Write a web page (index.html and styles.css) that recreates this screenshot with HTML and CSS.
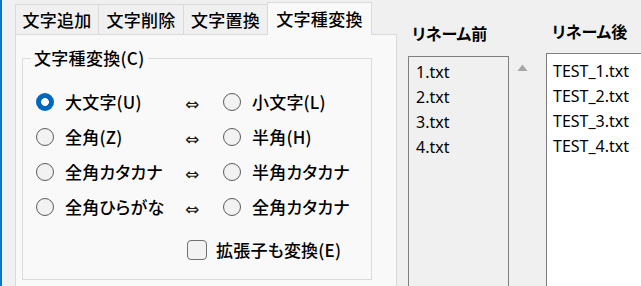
FILE: index.html
```html
<!DOCTYPE html>
<html lang="ja">
<head>
<meta charset="utf-8">
<title>文字種変換</title>
<link rel="stylesheet" href="styles.css">
</head>
<body>
<div class="window">
  <div class="accent"></div>
  <div class="left">
    <div class="tabs">
      <div class="tab t1">文字追加</div>
      <div class="tab t2">文字削除</div>
      <div class="tab t3">文字置換</div>
      <div class="tab t4 active">文字種変換</div>
    </div>
    <div class="panel">
      <fieldset class="group">
        <legend>文字種変換(C)</legend>
        <div class="rows">
          <div class="row">
            <div class="opt opt-left"><span class="radio checked"></span><span class="lbl">大文字(U)</span></div>
            <span class="arrow">⇔</span>
            <div class="opt"><span class="radio"></span><span class="lbl">小文字(L)</span></div>
          </div>
          <div class="row">
            <div class="opt opt-left"><span class="radio"></span><span class="lbl">全角(Z)</span></div>
            <span class="arrow">⇔</span>
            <div class="opt"><span class="radio"></span><span class="lbl">半角(H)</span></div>
          </div>
          <div class="row">
            <div class="opt opt-left"><span class="radio"></span><span class="lbl">全角カタカナ</span></div>
            <span class="arrow">⇔</span>
            <div class="opt"><span class="radio"></span><span class="lbl">半角カタカナ</span></div>
          </div>
          <div class="row">
            <div class="opt opt-left"><span class="radio"></span><span class="lbl">全角ひらがな</span></div>
            <span class="arrow">⇔</span>
            <div class="opt"><span class="radio"></span><span class="lbl">全角カタカナ</span></div>
          </div>
          <div class="check-row">
            <span class="checkbox"></span><span class="lbl">拡張子も変換(E)</span>
          </div>
        </div>
      </fieldset>
    </div>
  </div>
  <div class="right">
    <div class="col col-before">
      <div class="heading">リネーム前</div>
      <div class="list list-before">
        <div class="item">1.txt</div>
        <div class="item">2.txt</div>
        <div class="item">3.txt</div>
        <div class="item">4.txt</div>
      </div>
    </div>
    <div class="scroll">
      <svg width="11" height="7" viewBox="0 0 11 7"><polygon points="0.5,7 5.5,0.5 10.5,7" fill="#a6a6a6"/></svg>
    </div>
    <div class="col col-after">
      <div class="heading">リネーム後</div>
      <div class="list list-after">
        <div class="item">TEST_1.txt</div>
        <div class="item">TEST_2.txt</div>
        <div class="item">TEST_3.txt</div>
        <div class="item">TEST_4.txt</div>
      </div>
    </div>
  </div>
</div>
</body>
</html>
```

FILE: styles.css
```css
html, body {
  margin: 0;
  padding: 0;
  overflow: hidden;
  background: #f0f0f0;
}

body {
  font-family: "Noto Sans CJK JP", "Noto Sans", sans-serif;
  color: #000;
  font-feature-settings: "palt";
}

.window {
  display: flex;
  width: 641px;
  height: 286px;
  background: #f0f0f0;
}

.accent {
  width: 2px;
  flex-shrink: 0;
  background: #0078d7;
}

.left {
  margin-left: 13px;
  width: 382px;
  flex-shrink: 0;
  display: flex;
  flex-direction: column;
}

.tabs {
  display: flex;
  align-items: flex-end;
  height: 34px;
  position: relative;
  z-index: 1;
}

.tab {
  box-sizing: border-box;
  height: 30px;
  border: 1px solid #dadada;
  border-bottom: none;
  background: #f0f0f0;
  font-size: 17px;
  font-weight: 500;
  line-height: 26px;
  padding-top: 2px;
  text-align: center;
  letter-spacing: 0.3px;
}

.t1 { width: 84px; }
.t2 { width: 86px; margin-left: -1px; }
.t3 { width: 85px; margin-left: -1px; }
.t4 { width: 105px; margin-left: -1px; }

.tab.active {
  height: 33px;
  margin-bottom: -1px;
  background: #f9f9f9;
  padding-top: 0;
  line-height: 32px;
}

.panel {
  flex: 1;
  border: 1px solid #dadada;
  border-bottom: none;
  background: #f9f9f9;
  padding: 12px 25px 0 6px;
}

.group {
  box-sizing: border-box;
  margin: 0;
  width: 350px;
  height: 233px;
  padding: 0 0 0 8px;
  border: 1px solid #dcdcdc;
}

.group legend {
  padding: 0 3px;
  font-size: 17px;
  font-weight: 500;
  line-height: 22px;
  letter-spacing: 0.3px;
}

.rows {
  margin-top: 15px;
  margin-left: 5px;
}

.row {
  display: flex;
  align-items: center;
  height: 35px;
}

.opt {
  display: flex;
  align-items: center;
  gap: 11px;
}

.opt-left {
  width: 149px;
}

.lbl {
  font-size: 17px;
  font-weight: 500;
  line-height: 22px;
  letter-spacing: 0.2px;
}

.arrow {
  width: 38px;
  font-family: "DejaVu Sans", sans-serif;
  font-size: 17px;
  line-height: 22px;
  padding-top: 4px;
  color: #1a1a1a;
}

.radio {
  box-sizing: border-box;
  width: 18px;
  height: 18px;
  border-radius: 50%;
  border: 1px solid #5c5c5c;
  background: #f2f2f2;
  flex-shrink: 0;
}

.radio.checked {
  border: none;
  background: radial-gradient(circle, #ffffff 0 3.6px, #0067c0 4.2px);
}

.check-row {
  display: flex;
  align-items: center;
  gap: 9px;
  margin-top: 16px;
  margin-left: 151px;
  height: 20px;
}

.checkbox {
  box-sizing: border-box;
  width: 20px;
  height: 20px;
  border-radius: 4px;
  border: 1px solid #707070;
  background: #f2f2f2;
  flex-shrink: 0;
}

.right {
  display: flex;
  flex: 1;
  margin-left: 11px;
}

.col {
  display: flex;
  flex-direction: column;
}

.col-before {
  width: 101px;
  flex-shrink: 0;
  padding-top: 22px;
}

.col-after {
  flex: 1;
  padding-top: 20px;
}

.heading {
  font-size: 16px;
  font-weight: 700;
  line-height: 22px;
}

.col-before .heading {
  padding-left: 4px;
  margin-bottom: 12px;
}

.col-after .heading {
  padding-left: 6px;
  margin-bottom: 11px;
}

.list {
  flex: 1;
  border: 1px solid #7f7f7f;
  border-bottom: none;
}

.list-before {
  background: #f0f0f0;
  padding: 3px 0 0 7px;
}

.list-after {
  background: #ffffff;
  border-right: none;
  padding: 5px 0 0 6px;
}

.item {
  font-family: "Noto Sans", sans-serif;
  font-size: 16px;
  line-height: 25px;
}

.scroll {
  width: 37px;
  flex-shrink: 0;
  box-sizing: border-box;
  padding: 64px 0 0 8px;
}

.scroll svg {
  display: block;
}
```
